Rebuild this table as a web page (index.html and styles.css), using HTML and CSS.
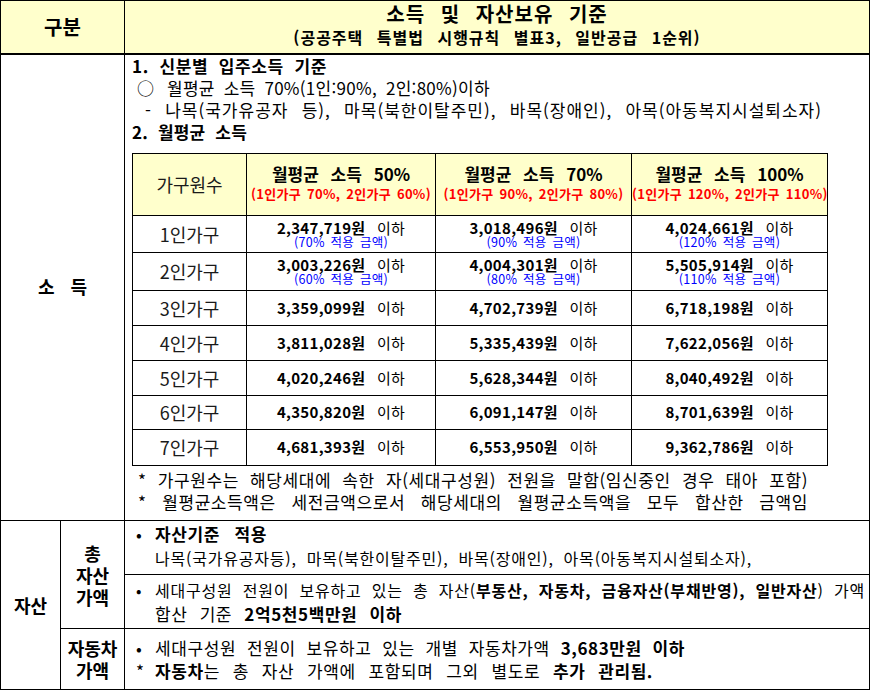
FILE: index.html
```html
<!DOCTYPE html>
<html lang="ko">
<head>
<meta charset="utf-8">
<title>소득 및 자산보유 기준</title>
<link rel="stylesheet" href="styles.css">
</head>
<body>
<table class="main">
  <colgroup><col class="c1"><col class="c2"><col class="c3"></colgroup>
  <tr class="r-head">
    <th colspan="2" class="h-gubun">구분</th>
    <th class="h-title">
      <div class="t1">소득 및 자산보유 기준</div>
      <div class="t2">(공공주택 특별법 시행규칙 별표3, 일반공급 1순위)</div>
    </th>
  </tr>
  <tr class="r-income">
    <td colspan="2" class="cat cat-income">소<span class="gap"></span>득</td>
    <td class="income">
      <div class="ln b w-l1">1. 신분별 입주소득 기준</div>
      <div class="ln ind1 w-l2">○ 월평균 소득 70%(1인:90%, 2인:80%)이하</div>
      <div class="ln ind2 w-l3">- 나목(국가유공자 등), 마목(북한이탈주민), 바목(장애인), 아목(아동복지시설퇴소자)</div>
      <div class="ln b w-l4">2. 월평균 소득</div>
      <table class="inc">
        <colgroup><col class="k1"><col class="k2"><col class="k3"><col class="k4"></colgroup>
        <tr class="ih">
          <th class="hh">가구원수</th>
          <th><div class="hm">월평균 소득 50%</div><div class="hr">(1인가구 70%, 2인가구 60%)</div></th>
          <th><div class="hm">월평균 소득 70%</div><div class="hr">(1인가구 90%, 2인가구 80%)</div></th>
          <th><div class="hm">월평균 소득 100%</div><div class="hr">(1인가구 120%, 2인가구 110%)</div></th>
        </tr>
        <tr class="ir ir-tall">
          <td class="hc">1인가구</td>
          <td><div class="v"><b>2,347,719원</b> 이하</div><div class="s">(70% 적용 금액)</div></td>
          <td><div class="v"><b>3,018,496원</b> 이하</div><div class="s">(90% 적용 금액)</div></td>
          <td><div class="v"><b>4,024,661원</b> 이하</div><div class="s">(120% 적용 금액)</div></td>
        </tr>
        <tr class="ir ir-tall2">
          <td class="hc">2인가구</td>
          <td><div class="v"><b>3,003,226원</b> 이하</div><div class="s">(60% 적용 금액)</div></td>
          <td><div class="v"><b>4,004,301원</b> 이하</div><div class="s">(80% 적용 금액)</div></td>
          <td><div class="v"><b>5,505,914원</b> 이하</div><div class="s">(110% 적용 금액)</div></td>
        </tr>
        <tr class="ir">
          <td class="hc">3인가구</td>
          <td class="v"><b>3,359,099원</b> 이하</td>
          <td class="v"><b>4,702,739원</b> 이하</td>
          <td class="v"><b>6,718,198원</b> 이하</td>
        </tr>
        <tr class="ir">
          <td class="hc">4인가구</td>
          <td class="v"><b>3,811,028원</b> 이하</td>
          <td class="v"><b>5,335,439원</b> 이하</td>
          <td class="v"><b>7,622,056원</b> 이하</td>
        </tr>
        <tr class="ir">
          <td class="hc">5인가구</td>
          <td class="v"><b>4,020,246원</b> 이하</td>
          <td class="v"><b>5,628,344원</b> 이하</td>
          <td class="v"><b>8,040,492원</b> 이하</td>
        </tr>
        <tr class="ir ir-short">
          <td class="hc">6인가구</td>
          <td class="v"><b>4,350,820원</b> 이하</td>
          <td class="v"><b>6,091,147원</b> 이하</td>
          <td class="v"><b>8,701,639원</b> 이하</td>
        </tr>
        <tr class="ir ir-last">
          <td class="hc">7인가구</td>
          <td class="v"><b>4,681,393원</b> 이하</td>
          <td class="v"><b>6,553,950원</b> 이하</td>
          <td class="v"><b>9,362,786원</b> 이하</td>
        </tr>
      </table>
      <div class="note n1">* 가구원수는 해당세대에 속한 자(세대구성원) 전원을 말함(임신중인 경우 태아 포함)</div>
      <div class="note">* 월평균소득액은 세전금액으로서 해당세대의 월평균소득액을 모두 합산한 금액임</div>
    </td>
  </tr>
  <tr class="r-a1">
    <td rowspan="3" class="cat cat-asset">자산</td>
    <td rowspan="2" class="sub sub-total">총<br>자산<br>가액</td>
    <td class="acell acell-1">
      <div class="al w-a1"><span class="bul">•</span><b>자산기준 적용</b></div>
      <div class="al cont w-a2 tight">나목(국가유공자등), 마목(북한이탈주민), 바목(장애인), 아목(아동복지시설퇴소자),</div>
    </td>
  </tr>
  <tr class="r-a2">
    <td class="acell">
      <div class="al w-full tight"><span class="bul">•</span>세대구성원 전원이 보유하고 있는 총 자산(<b>부동산, 자동차, 금융자산(부채반영), 일반자산</b>) 가액</div>
      <div class="al cont w-a4">합산 기준 <b>2억5천5백만원 이하</b></div>
    </td>
  </tr>
  <tr class="r-a3">
    <td class="sub sub-car">자동차<br>가액</td>
    <td class="acell">
      <div class="al w-a5"><span class="bul">•</span>세대구성원 전원이 보유하고 있는 개별 자동차가액 <b>3,683만원 이하</b></div>
      <div class="al w-a6"><span class="bul star">*</span><b>자동차</b>는 총 자산 가액에 포함되며 그외 별도로 <b>추가 관리됨.</b></div>
    </td>
  </tr>
</table>
</body>
</html>
```

FILE: styles.css
```css
html, body {
  margin: 0;
  padding: 0;
  background: #ffffff;
}

body {
  font-family: "Noto Sans CJK KR", "Noto Sans", sans-serif;
  color: #000;
  font-size: 16px;
}

.main {
  width: 870px;
  border-collapse: collapse;
  table-layout: fixed;
}

.main > tbody > tr > th,
.main > tbody > tr > td {
  border: 1px solid #000;
  padding: 0;
}

.c1 { width: 60px; }
.c2 { width: 64px; }

/* header */
.r-head { height: 53px; }
.r-head th {
  background: #ffffcc;
  border-bottom: 2px solid #000 !important;
  font-weight: bold;
  text-align: center;
  vertical-align: middle;
}

.h-gubun {
  font-size: 20px;
  line-height: 24px;
}

.t1 {
  font-size: 20px;
  line-height: 24px;
  letter-spacing: 1px;
  word-spacing: 9px;
  margin-top: -3px;
}

.t2 {
  font-size: 16px;
  line-height: 22px;
  letter-spacing: 1px;
  word-spacing: 8px;
}

/* category cells */
.cat {
  text-align: center;
  vertical-align: middle;
  font-weight: bold;
  font-size: 18px;
  line-height: 24px;
}

.cat-income { padding-bottom: 3px !important; }

.gap {
  display: inline-block;
  width: 16px;
}

/* justified text lines */
.ln,
.note,
.al {
  text-align: justify;
  text-align-last: justify;
  letter-spacing: 0.6px;
  word-spacing: 0;
  font-size: 17px;
}

/* income cell */
.r-income { height: 467px; }

.income {
  vertical-align: top;
  padding: 0 0 0 7px !important;
}

.ln { line-height: 22px; }

.ln.b { font-weight: bold; }
.ind1 { padding-left: 5px; }
.ind2 { padding-left: 13px; }

.w-l1 { width: 195px; }
.w-l2 { width: 353px; letter-spacing: 0.3px; }
.w-l3 { width: 677px; letter-spacing: 1px; }
.w-l4 { width: 115px; letter-spacing: 0.2px; }

.inc {
  margin-top: 10px;
  width: 695px;
  border-collapse: collapse;
  table-layout: fixed;
}

.inc th,
.inc td {
  border: 1px solid #000;
  padding: 0;
  text-align: center;
  vertical-align: middle;
}

.k1 { width: 114px; }
.k2 { width: 189px; }
.k3 { width: 196px; }
.k4 { width: 196px; }

.ih { height: 62px; }
.ih th { background: #ffffcc; }

.hh {
  font-weight: normal;
  font-size: 18px;
  color: #1a1a1a;
}

.hm {
  font-weight: bold;
  font-size: 17px;
  line-height: 22px;
  word-spacing: 7px;
  margin-top: -3px;
}

.hr {
  color: #ff0000;
  font-weight: bold;
  font-size: 13px;
  line-height: 18px;
  letter-spacing: 0.3px;
  white-space: nowrap;
  word-spacing: 2px;
}

.ir { height: 35px; }
.ir-tall { height: 37px; }
.ir-tall2 { height: 38px; }
.ir-short { height: 34px; }
.ir-last { height: 36px; }

.hc {
  font-size: 18px;
  color: #1a1a1a;
}

.v {
  font-size: 15px;
  line-height: 16px;
  letter-spacing: 0.3px;
  word-spacing: 7px;
  white-space: nowrap;
}

.s {
  color: #0000ff;
  font-size: 12.5px;
  line-height: 12px;
  letter-spacing: 0.3px;
  word-spacing: 2px;
}

.note {
  line-height: 22px;
  margin-left: 6px;
  width: 670px;
}

.n1 { margin-top: 3px; }

/* asset rows */
.r-a1 { height: 54px; }
.r-a2 { height: 54px; }
.r-a3 { height: 61px; }

.sub {
  text-align: center;
  vertical-align: middle;
  font-weight: bold;
  font-size: 18px;
  line-height: 22px;
}

.acell {
  vertical-align: middle;
  padding: 0 4px 0 11px !important;
}

.acell-1 { padding-bottom: 3px !important; }
.acell-1 .al { line-height: 24px; }

.al { line-height: 23px; }

.al.cont { padding-left: 19px; }
.al.tight { font-size: 16px; letter-spacing: 0.8px; }

.w-a1 { width: 131px; }
.w-a2 { width: 597px; }
.w-full { width: 729px; }
.w-a4 { width: 247px; }
.w-a5 { width: 549px; }
.w-a6 { width: 517px; }

.bul {
  display: inline-block;
  width: 19px;
  letter-spacing: 0;
}

.bul.star { font-weight: normal; }
```
